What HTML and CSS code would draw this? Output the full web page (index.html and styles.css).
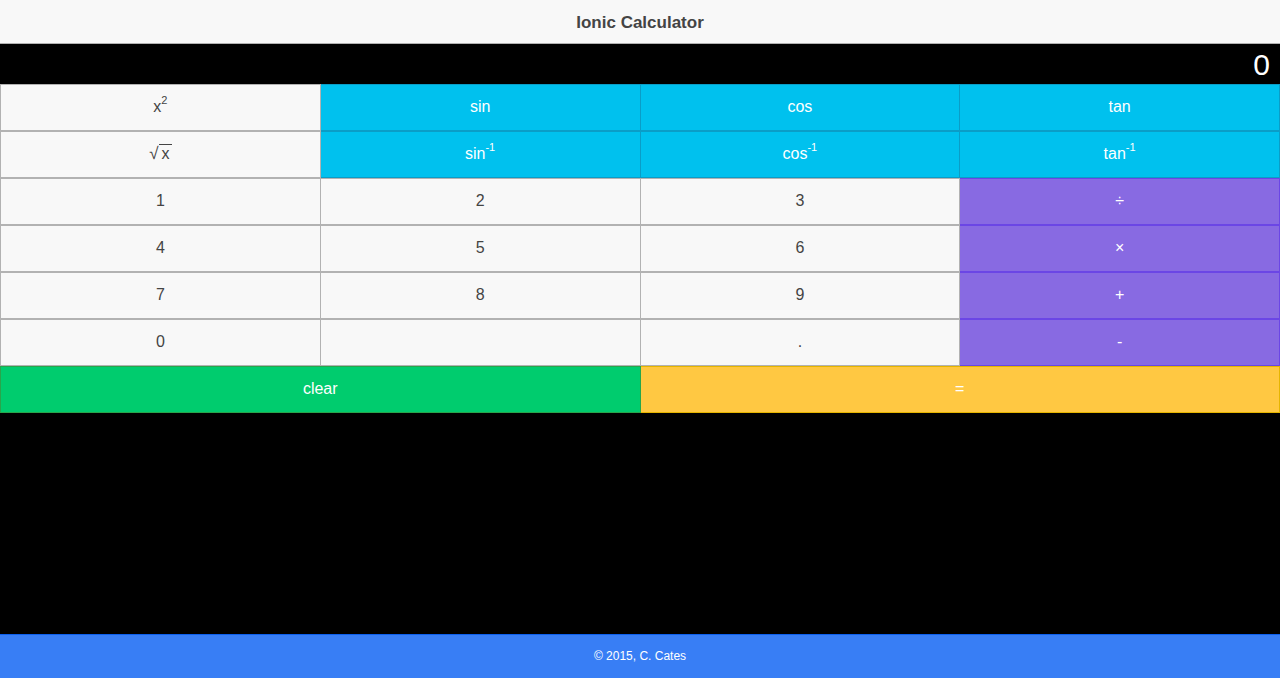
FILE: index.html
```html
<!DOCTYPE html>
<html>
<head>
<meta charset="utf-8">
<title>Ionic Calculator</title>
<link rel="stylesheet" href="styles.css">
</head>
<body>
<div class="app">
  <header class="bar-header"><h1 class="title">Ionic Calculator</h1></header>
  <main class="content">
    <div class="display">0</div>
    <div class="pad">
      <div class="row">
        <button class="btn">x<sup>2</sup></button>
        <button class="btn calm">sin</button>
        <button class="btn calm">cos</button>
        <button class="btn calm">tan</button>
      </div>
      <div class="row">
        <button class="btn"><span class="rad">√</span><span class="radicand">x</span></button>
        <button class="btn calm">sin<sup>-1</sup></button>
        <button class="btn calm">cos<sup>-1</sup></button>
        <button class="btn calm">tan<sup>-1</sup></button>
      </div>
      <div class="row">
        <button class="btn">1</button>
        <button class="btn">2</button>
        <button class="btn">3</button>
        <button class="btn royal">÷</button>
      </div>
      <div class="row">
        <button class="btn">4</button>
        <button class="btn">5</button>
        <button class="btn">6</button>
        <button class="btn royal">×</button>
      </div>
      <div class="row">
        <button class="btn">7</button>
        <button class="btn">8</button>
        <button class="btn">9</button>
        <button class="btn royal">+</button>
      </div>
      <div class="row">
        <button class="btn">0</button>
        <button class="btn"></button>
        <button class="btn">.</button>
        <button class="btn royal">-</button>
      </div>
      <div class="row">
        <button class="btn balanced">clear</button>
        <button class="btn energized">=</button>
      </div>
    </div>
  </main>
  <footer class="bar-footer">© 2015, C. Cates</footer>
</div>
</body>
</html>
```
FILE: styles.css
```css
* { box-sizing: border-box; }
html, body { margin: 0; padding: 0; height: 100%; }
body {
  font-family: "Liberation Sans", Arial, sans-serif;
  background: #000;
  color: #444;
}
.app {
  display: flex;
  flex-direction: column;
  height: 678px;
}
.bar-header {
  height: 44px;
  background: #f8f8f8;
  border-bottom: 1px solid #b2b2b2;
  display: flex;
  align-items: center;
  justify-content: center;
  padding-top: 2px;
}
.title {
  margin: 0;
  font-size: 17px;
  font-weight: bold;
  color: #444;
}
.content {
  flex: 1;
  background: #000;
}
.display {
  height: 40px;
  color: #fff;
  font-size: 30px;
  text-align: right;
  padding-right: 10px;
  line-height: 42px;
}
.row {
  display: flex;
}
.btn {
  flex: 1;
  height: 47px;
  margin: 0;
  padding: 0 0 2px 0;
  border: 1px solid #b2b2b2;
  background: #f8f8f8;
  color: #444;
  font-family: "Liberation Sans", Arial, sans-serif;
  font-size: 16px;
  line-height: 20px;
  cursor: pointer;
}
.btn + .btn { border-left-width: 0; }
.btn sup {
  font-size: 11px;
  line-height: 0;
  position: relative;
  top: -1px;
}
.rad {
  font-size: 17px;
}
.radicand {
  border-top: 1px solid #444;
  padding: 0 2px 0 3px;
}
.calm {
  background: #00c1ee;
  border-color: #0a9dc7;
  color: #fff;
}
.royal {
  background: #886ae2;
  border-color: #6b46e5;
  color: #fff;
}
.balanced {
  background: #00cc6e;
  border-color: #28a54c;
  color: #fff;
}
.energized {
  background: #ffc842;
  border-color: #e6b500;
  color: #fff;
}
.bar-footer {
  height: 44px;
  background: #387ef5;
  border-top: 1px solid #0c60ee;
  color: #fff;
  font-size: 12px;
  display: flex;
  align-items: center;
  justify-content: center;
  padding-bottom: 2px;
}
```
